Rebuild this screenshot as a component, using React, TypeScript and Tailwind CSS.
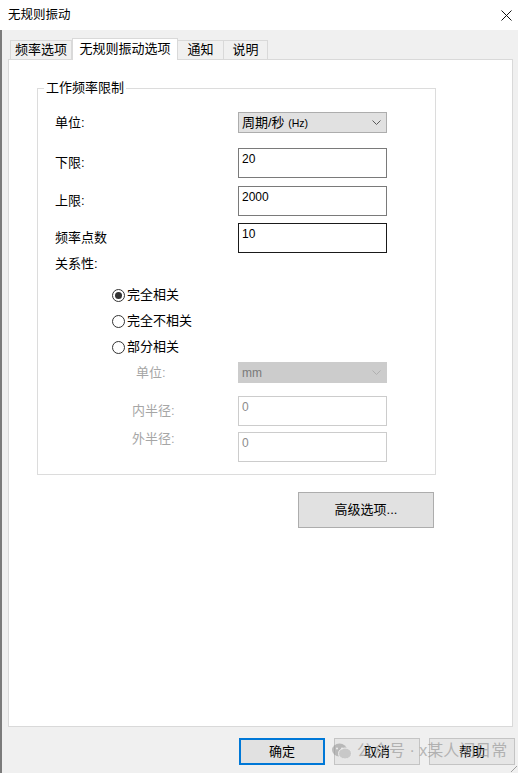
import React from "react";

const FONT = { fontFamily: '"Liberation Sans", "Noto Sans CJK SC", sans-serif' };

function Chevron({ color }: { color: string }) {
  return (
    <svg width="9" height="5" viewBox="0 0 9 5" className="shrink-0">
      <path d="M0.5 0.5 L4.5 4.5 L8.5 0.5" fill="none" stroke={color} strokeWidth="1" />
    </svg>
  );
}

function Radio({ checked, label }: { checked?: boolean; label: string }) {
  return (
    <div className="flex items-center h-[18px] pl-[57px] gap-[2px]">
      <div className="w-[13px] h-[13px] rounded-full border border-[#333333] bg-white flex items-center justify-center">
        {checked ? <div className="w-[7px] h-[7px] rounded-full bg-[#333333]" /> : null}
      </div>
      <span className="text-[13px] leading-[18px] text-black">{label}</span>
    </div>
  );
}

function TextBox({ value, focused, disabled }: { value: string; focused?: boolean; disabled?: boolean }) {
  const border = disabled ? "border-[#cccccc]" : focused ? "border-[#1a1a1a]" : "border-[#7a7a7a]";
  const color = disabled ? "text-[#8c8c8c]" : "text-black";
  return (
    <div className={`w-[149px] h-[30px] border ${border} bg-white pl-[3px] pt-[2px] text-[12px] leading-[16px] ${color}`}>
      {value}
    </div>
  );
}

export default function App() {
  return (
    <div className="w-[518px] h-[773px] bg-[#f0f0f0] flex flex-col relative overflow-hidden" style={FONT}>
      {/* Title bar */}
      <div className="h-[30px] bg-white flex items-center justify-between pl-[8px] pr-[6px] shrink-0">
        <span className="text-[12.5px] leading-[18px] text-black">无规则振动</span>
        <svg width="11" height="11" viewBox="0 0 11 11">
          <path d="M0.5 0.5 L10.5 10.5 M10.5 0.5 L0.5 10.5" stroke="#111" strokeWidth="1" />
        </svg>
      </div>

      {/* Body */}
      <div className="flex-1 flex flex-col border-l-2 border-[#7b7b7b]">
        {/* Tabs */}
        <div className="flex items-end h-[22px] mt-[8px] ml-[8px] relative z-10 -mb-[1px]">
          <div className="w-[62px] h-[19px] mb-[1px] bg-[#f0f0f0] border border-b-0 border-[#d9d9d9] flex items-center justify-center text-[13px] leading-[18px] text-black">
            频率选项
          </div>
          <div className="w-[106px] h-[22px] bg-white border border-b-0 border-[#d9d9d9] flex items-center justify-center pb-[2px] text-[13px] leading-[18px] text-black">
            无规则振动选项
          </div>
          <div className="w-[46px] h-[19px] mb-[1px] bg-[#f0f0f0] border border-b-0 border-l-0 border-[#d9d9d9] flex items-center justify-center text-[13px] leading-[18px] text-black">
            通知
          </div>
          <div className="w-[44px] h-[19px] mb-[1px] bg-[#f0f0f0] border border-b-0 border-l-0 border-[#d9d9d9] flex items-center justify-center text-[13px] leading-[18px] text-black">
            说明
          </div>
        </div>

        {/* Panel */}
        <div className="ml-[6px] w-[505px] h-[668px] bg-white border border-[#d9d9d9] pl-[28px] pt-[19px] flex flex-col shrink-0">
          <fieldset className="w-[399px] border border-[#dcdcdc] pb-[12px]">
            <legend className="ml-[6px] px-[2px] text-[13px] leading-[18px] text-black">工作频率限制</legend>
            <div className="pl-[17px] flex flex-col">
              <div className="flex items-center h-[21px] mt-[15px]">
                <span className="w-[183px] text-[13px] leading-[18px] text-black">单位:</span>
                <div className="w-[149px] h-[21px] bg-[#e1e1e1] border border-[#adadad] flex items-center justify-between pl-[3px] pr-[5px]">
                  <span className="text-[13px] leading-[18px] text-black">
                    周期/秒 <span className="text-[10.5px]">(Hz)</span>
                  </span>
                  <Chevron color="#5a5a5a" />
                </div>
              </div>
              <div className="flex items-center h-[30px] mt-[15px]">
                <span className="w-[183px] text-[13px] leading-[18px] text-black">下限:</span>
                <TextBox value="20" />
              </div>
              <div className="flex items-center h-[30px] mt-[8px]">
                <span className="w-[183px] text-[13px] leading-[18px] text-black">上限:</span>
                <TextBox value="2000" />
              </div>
              <div className="flex items-center h-[30px] mt-[7px]">
                <span className="w-[183px] text-[13px] leading-[18px] text-black">频率点数</span>
                <TextBox value="10" focused />
              </div>
              <div className="flex items-center h-[18px] mt-[2px]">
                <span className="text-[13px] leading-[18px] text-black">关系性:</span>
              </div>
              <div className="mt-[13px]">
                <Radio checked label="完全相关" />
              </div>
              <div className="mt-[8px]">
                <Radio label="完全不相关" />
              </div>
              <div className="mt-[8px]">
                <Radio label="部分相关" />
              </div>
              <div className="flex items-center h-[21px] mt-[6px]">
                <span className="w-[183px] pl-[81px] text-[13px] leading-[18px] text-[#a6a6a6]">单位:</span>
                <div className="w-[149px] h-[21px] bg-[#cccccc] border border-[#cccccc] flex items-center justify-between pl-[3px] pr-[5px]">
                  <span className="text-[12px] leading-[16px] text-[#7a7a7a]">mm</span>
                  <Chevron color="#b0b0b0" />
                </div>
              </div>
              <div className="flex items-center h-[30px] mt-[13px]">
                <span className="w-[183px] pl-[77px] text-[13px] leading-[18px] text-[#a6a6a6]">内半径:</span>
                <TextBox value="0" disabled />
              </div>
              <div className="flex items-start h-[30px] mt-[6px]">
                <span className="w-[183px] pl-[77px] -mt-[2px] text-[13px] leading-[18px] text-[#a6a6a6]">外半径:</span>
                <TextBox value="0" disabled />
              </div>
            </div>
          </fieldset>

          <div className="ml-[261px] mt-[17px] w-[136px] h-[36px] bg-[#e1e1e1] border border-[#adadad] flex items-center justify-center text-[13px] leading-[18px] text-black">
            高级选项...
          </div>
        </div>

        {/* Footer buttons */}
        <div className="flex justify-end gap-[9px] mt-[11px] pr-[3px] relative">
          <div className="w-[86px] h-[27px] bg-[#e1e1e1] border-2 border-[#0078d7] flex items-center justify-center text-[13px] leading-[18px] text-black">
            确定
          </div>
          <div className="w-[86px] h-[27px] bg-[#e6e6e6] border border-[#c4c4c4] flex items-center justify-center text-[13px] leading-[18px] text-black">
            取消
          </div>
          <div className="w-[86px] h-[27px] bg-[#e6e6e6] border border-[#c4c4c4] flex items-center justify-center text-[13px] leading-[18px] text-black">
            帮助
          </div>

          {/* Watermark overlay */}
          <div className="absolute left-[330px] top-[3px] flex items-center gap-[5px] pointer-events-none opacity-60">
            <svg width="20" height="17" viewBox="0 0 20 17">
              <ellipse cx="7.5" cy="7" rx="7.5" ry="6.5" fill="#9a9a9a" />
              <ellipse cx="13" cy="10.5" rx="6.5" ry="5.5" fill="#b5b5b5" stroke="#f0f0f0" strokeWidth="1" />
              <circle cx="5" cy="5.5" r="1" fill="#f0f0f0" />
              <circle cx="10" cy="5.5" r="1" fill="#f0f0f0" />
            </svg>
            <span className="text-[16px] leading-[20px] text-[#8f8f8f]">
              公众号 · x某人间日常
            </span>
          </div>
        </div>
      </div>

      {/* Resize grip */}
      <svg width="6" height="6" viewBox="0 0 6 6" className="absolute right-[1px] bottom-[1px]">
        <path d="M0 6 L6 0" stroke="#a0a0a0" strokeWidth="1" />
      </svg>
    </div>
  );
}
